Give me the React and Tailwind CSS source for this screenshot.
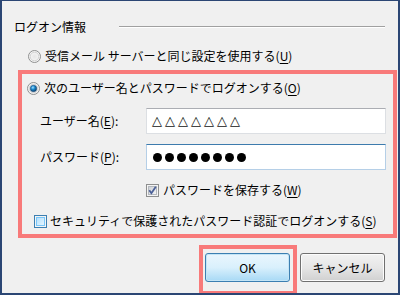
import React from 'react';

const font = { fontFamily: '"Noto Sans CJK JP", "Noto Sans", sans-serif' };

function Radio({ checked }) {
  return (
    <svg width="13" height="13" viewBox="0 0 13 13" className="shrink-0">
      <defs>
        <radialGradient id="rb" cx="50%" cy="50%" r="55%">
          <stop offset="0%" stopColor="#e6e6e6" />
          <stop offset="100%" stopColor="#fbfbfb" />
        </radialGradient>
        <radialGradient id="rd" cx="40%" cy="35%" r="65%">
          <stop offset="0%" stopColor="#a7e0ff" />
          <stop offset="45%" stopColor="#1b8bd0" />
          <stop offset="100%" stopColor="#0b3e6b" />
        </radialGradient>
      </defs>
      <circle cx="6.5" cy="6.5" r="6" fill="url(#rb)" stroke="#8e8f8f" strokeWidth="1" />
      <circle cx="6.5" cy="6.5" r="4.3" fill="none" stroke="#d2d2d2" strokeWidth="1" />
      {checked && <circle cx="6.5" cy="6.5" r="3.2" fill="url(#rd)" stroke="#1d4f7f" strokeWidth="0.6" />}
    </svg>
  );
}

function Check({ checked, hover }) {
  return (
    <svg width="13" height="13" viewBox="0 0 13 13" className="shrink-0">
      <defs>
        <linearGradient id="cb" x1="0" y1="0" x2="1" y2="1">
          <stop offset="0%" stopColor="#cbcfd5" />
          <stop offset="100%" stopColor="#f6f6f6" />
        </linearGradient>
        <linearGradient id="ch" x1="0" y1="0" x2="1" y2="1">
          <stop offset="0%" stopColor="#b1dffd" />
          <stop offset="100%" stopColor="#e9f7fe" />
        </linearGradient>
      </defs>
      <rect x="0.5" y="0.5" width="12" height="12" fill="#f4f4f4" stroke={hover ? '#3c7fb1' : '#8e8f8f'} />
      <rect x="2.5" y="2.5" width="8" height="8" fill={hover ? 'url(#ch)' : 'url(#cb)'} stroke={hover ? '#79c6f9' : '#b4b8be'} strokeWidth="1" />
      {checked && <path d="M3.3 6.2 L5.4 9.2 L9.8 2.8" fill="none" stroke="#4a5f97" strokeWidth="1.8" />}
    </svg>
  );
}

function Key({ c }) {
  return <span className="underline underline-offset-2">{c}</span>;
}

export default function App() {
  return (
    <div
      className="w-[400px] h-[295px] box-border overflow-hidden bg-[#f0f0f0] border-t border-l-2 border-r-2 border-b-2 border-[#2b4674] text-[12px] leading-[16px] text-black flex flex-col"
      style={font}
    >
      <div className="flex items-center pt-[18px] pl-[12px] pr-[13px]">
        <span>ログオン情報</span>
        <div className="flex-1 ml-[33px] border-t border-[#a0a0a0] border-b border-b-white" />
      </div>

      <div className="flex items-center mt-[13px] pl-[26px] gap-[4px]">
        <Radio />
        <span>受信メール サーバーと同じ設定を使用する(<Key c="U" />)</span>
      </div>

      <div className="w-[379px] ml-[16px] mt-[6px] border-4 border-[#f87a7a] flex flex-col pb-[5px]">
        <div className="flex items-center pt-[6px] pl-[5px] gap-[4px]">
          <Radio checked />
          <span>次のユーザー名とパスワードでログオンする(<Key c="O" />)</span>
        </div>

        <div className="flex items-center mt-[12px] pl-[18px] pr-[7px]">
          <span className="w-[106px]">ユーザー名(<Key c="E" />):</span>
          <div
            className="flex-1 h-[26px] bg-white border border-[#dcdfe3] border-t-[#abadb3] flex items-center pl-[5px] text-[13px] tracking-[3px] text-[#111]"
            style={{ fontFamily: '"DejaVu Sans", "Noto Sans CJK JP", sans-serif' }}
          >
            △△△△△△△
          </div>
        </div>

        <div className="flex items-center mt-[10px] pl-[18px] pr-[7px]">
          <span className="w-[106px]">パスワード(<Key c="P" />):</span>
          <div className="flex-1 h-[26px] bg-white border border-[#b5cfe7] border-t-[#3d7bad] flex items-center pl-[6px] gap-[3px]">
            {[0, 1, 2, 3, 4, 5, 6, 7].map((i) => (
              <div key={i} className="w-[9px] h-[9px] rounded-full bg-black" />
            ))}
          </div>
        </div>

        <div className="flex items-center mt-[12px] pl-[124px] gap-[4px]">
          <Check checked />
          <span>パスワードを保存する(<Key c="W" />)</span>
        </div>

        <div className="flex items-center mt-[15px] pl-[12px] gap-[3px]">
          <Check hover />
          <span>セキュリティで保護されたパスワード認証でログオンする(<Key c="S" />)</span>
        </div>
      </div>

      <div className="flex items-start justify-end mt-[7px] pr-[13px] gap-[3px]">
        <div className="border-4 border-[#f87a7a] pl-[2px] pr-[3px] pt-[4px] pb-[9px]">
          <button className="w-[85px] h-[29px] rounded-[3px] border border-[#3c7fb1] bg-gradient-to-b from-[#eaf6fd] via-[#d9f0fc] to-[#a7d9f5] shadow-[inset_0_0_0_1px_#c4e5f6] text-[12px]">
            OK
          </button>
        </div>
        <button className="mt-[8px] w-[85px] h-[29px] rounded-[3px] border border-[#707070] bg-gradient-to-b from-[#f2f2f2] via-[#e6e6e6] to-[#d0d0d0] shadow-[inset_0_0_0_1px_#fcfcfc] text-[12px]">
          キャンセル
        </button>
      </div>
    </div>
  );
}
